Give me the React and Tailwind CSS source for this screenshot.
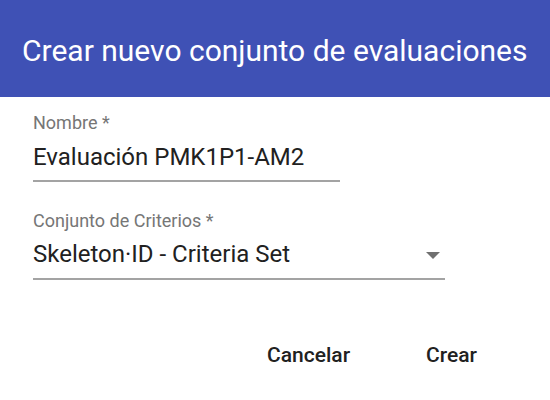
export default function App() {
  return (
    <div className="w-[550px] h-[400px] bg-white overflow-hidden" style={{ fontFamily: 'Roboto, "Liberation Sans", sans-serif' }}>
      <div className="h-[97px] bg-[#3f51b5] pt-[36px] pl-[22px]">
        <h1 className="text-white text-[30px] leading-[30px] font-normal">Crear nuevo conjunto de evaluaciones</h1>
      </div>

      <div className="pl-[33px] pt-[16px]">
        <div className="w-[307px]">
          <label className="block text-[18px] leading-[20px] text-[#767676]">Nombre *</label>
          <div className="mt-[10px] pb-[9px] border-b-2 border-[#a3a3a3] text-[24px] leading-[28px] text-[#212121]">
            Evaluación PMK1P1-AM2
          </div>
        </div>

        <div className="w-[412px] mt-[29px]">
          <label className="block text-[18px] leading-[20px] text-[#767676]">Conjunto de Criterios *</label>
          <div className="mt-[9px] pb-[10px] border-b-2 border-[#a3a3a3] flex items-center justify-between">
            <span className="text-[24px] leading-[28px] text-[#212121]">Skeleton·ID - Criteria Set</span>
            <svg width="14" height="7" viewBox="0 0 14 7" className="mt-[3px] mr-[5px]">
              <path d="M0 0 L14 0 L7 7 Z" fill="#707070" />
            </svg>
          </div>
        </div>
      </div>

      <div className="flex justify-end items-center pr-[57px] mt-[63px] gap-[44px]">
        <button className="text-[21px] leading-[24px] font-medium text-[#212121] px-[16px]">Cancelar</button>
        <button className="text-[21px] leading-[24px] font-medium text-[#212121] px-[16px]">Crear</button>
      </div>
    </div>
  );
}
